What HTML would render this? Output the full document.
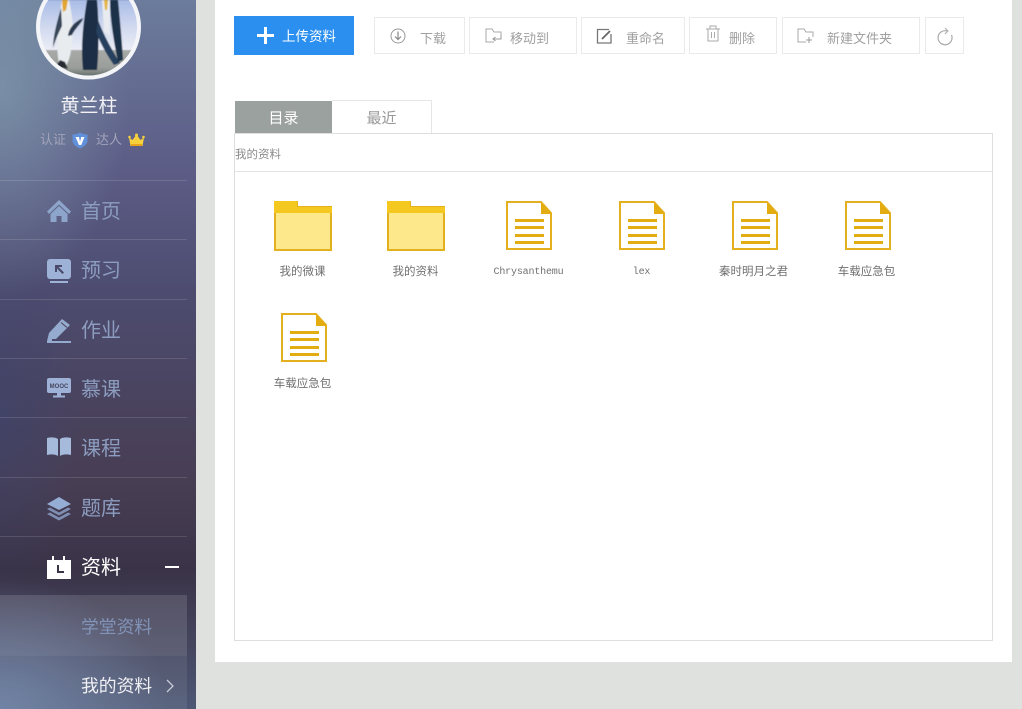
<!DOCTYPE html>
<html lang="zh"><head><meta charset="utf-8"><style>
html,body{margin:0;padding:0}
body{width:1022px;height:709px;overflow:hidden;background:#dfe1de;position:relative;font-family:"Liberation Sans","Noto Sans CJK SC",sans-serif;color:#999}
.a{position:absolute;white-space:nowrap}
#side{left:0;top:0;width:196px;height:709px;overflow:hidden;background:
radial-gradient(ellipse 170px 130px at 0 709px,rgba(106,128,165,.85),rgba(106,128,165,0)),
radial-gradient(ellipse 130px 210px at 0 90px,rgba(130,158,175,.7),rgba(130,158,175,0)),
radial-gradient(ellipse 80px 170px at 0 420px,rgba(58,68,112,.5),rgba(58,68,112,0)),
linear-gradient(180deg,#6c7c9c 0,#5c5c86 170px,#4d4c70 290px,#4a4460 390px,#483e54 480px,#3a3348 570px,#454760 650px,#4d5875 709px)}
.sep{position:absolute;left:0;width:187px;height:1px;background:rgba(255,255,255,.13)}
.mi{position:absolute;left:81px;font-size:20px;line-height:24px;color:#8c9dc0}
.ic{position:absolute;left:47px}
.btn{position:absolute;top:17px;height:37px;border:1px solid #eaeaea;box-sizing:border-box;background:#fff;font-size:13px;color:#a0a0a0;line-height:41px}
.btn span{position:absolute;top:0;white-space:nowrap}
.btn svg{position:absolute}
.fn{position:absolute;width:113px;text-align:center;font-size:11.5px;line-height:14px;color:#707070}
.mono{font-family:"Liberation Mono",monospace;font-size:10px;letter-spacing:-.17px}
</style></head><body>
<div class="a" id="side">
<svg class="a" style="left:36px;top:0" width="106" height="82" viewBox="36 0 106 82"><defs><clipPath id="c"><circle cx="88.500" cy="27" r="50"/></clipPath><linearGradient id="sk" x1="0" y1="0" x2="0" y2="1"><stop offset="0" stop-color="#a9bce6"/><stop offset=".5" stop-color="#cfd8ef"/><stop offset="1" stop-color="#eceef6"/></linearGradient><linearGradient id="gr" x1="0" y1="0" x2="0" y2="1"><stop offset="0" stop-color="#a8aaa8"/><stop offset=".6" stop-color="#9a9e9a"/><stop offset="1" stop-color="#4e5855"/></linearGradient><filter id="b" x="-5%" y="-5%" width="110%" height="110%"><feGaussianBlur stdDeviation=".5"/></filter></defs>
<g clip-path="url(#c)"><g filter="url(#b)"><rect x="36" y="0" width="106" height="51" fill="url(#sk)"/><rect x="36" y="50" width="106" height="30" fill="url(#gr)"/>
<path d="M59 64C56 48 57 24 62 0H69C73 18 74 34 71 50C70 58 68 62 66 66Z" fill="#e9ecef"/>
<path d="M61 8C57 22 53 36 53 48C56 38 59 32 62 26Z" fill="#39465a"/>
<path d="M62 0H68L66 10L63 12Z" fill="#e2a52e"/>
<path d="M60 60L56 66L68 69L65 62Z" fill="#252b30"/>
<path d="M68 36C69 27 76 21 83 18C83 22 76 27 72 35Z" fill="#2a3a50"/>
<path d="M83 70C81 50 82 30 87 0H97C99 20 99 50 97 70Z" fill="#1b2e45"/>
<path d="M98 20C104 36 112 50 120 63L114 65C106 54 100 42 96 32Z" fill="#27405f"/>
<path d="M102 0H110V36L104 32Z" fill="#e8ebf0"/>
<path d="M104 0H108L107 10H105Z" fill="#e3b53c"/>
<path d="M110 0H118C120 20 122 42 123 60L118 62C114 42 110 20 110 0Z" fill="#1a3149"/></g></g>
<circle cx="88.500" cy="27" r="50.500" fill="none" stroke="#f4f5f8" stroke-width="4"/></svg>
<div class="a" style="left:0;width:178px;top:95px;text-align:center;font-size:19px;line-height:24px;color:#f2f2f6">黄兰柱</div>
<div class="a" style="left:40px;top:132px;font-size:13px;line-height:16px;color:#a3a3ba">认证</div>
<svg class="a" style="left:72px;top:132px" width="16" height="17" viewBox="0 0 16 17"><path d="M.5 2.500C4 2.500 6 1.500 8 .5C10 1.500 12 2.500 15.500 2.500V8.500C15.500 12.500 11 15 8 16.500C5 15 .5 12.500 .5 8.500Z" fill="#6291dc"/><path d="M3.500 5H7L8 10L9.200 5H12.500L9.200 13H7Z" fill="#fff"/></svg>
<div class="a" style="left:96px;top:132px;font-size:13px;line-height:16px;color:#a3a3ba">达人</div>
<svg class="a" style="left:128px;top:133px" width="17" height="14" viewBox="0 0 17 14"><path d="M1 4.500L4.500 7L8.500 1.500L12.500 7L16 4.500L14.500 13H2.500Z" fill="#f7d13c"/><circle cx="8.500" cy="2" r="1.500" fill="#f7d13c"/><circle cx="1.500" cy="4" r="1.300" fill="#f7d13c"/><circle cx="15.500" cy="4" r="1.300" fill="#f7d13c"/><rect x="3" y="11" width="11" height="2" fill="#e8a519"/></svg>
<div class="sep" style="top:180px"></div><div class="sep" style="top:239px"></div><div class="sep" style="top:299px"></div><div class="sep" style="top:358px"></div><div class="sep" style="top:417px"></div><div class="sep" style="top:477px"></div><div class="sep" style="top:536px"></div>
<svg class="ic" style="top:200px" width="24" height="23" viewBox="0 0 24 23"><path d="M12 0L24 11.500L22 14L12 4.500L2 14L0 11.500Z" fill="#8ea5cb"/><path d="M3.500 14L12 6L20.500 14V22H14.500V16H9.500V22H3.500Z" fill="#8ea5cb"/></svg>
<div class="mi" style="top:200px">首页</div>
<svg class="ic" style="top:259px" width="24" height="25" viewBox="0 0 24 25"><rect x="0" y="0" width="24" height="20" rx="3" fill="#9db2d6"/><path d="M8 6H15V8H11.500L17 13.500L15.500 15L10 9.500V13H8Z" fill="#4b4a6b"/><rect x="3" y="22" width="18" height="2" fill="#9db2d6"/></svg>
<div class="mi" style="top:259px">预习</div>
<svg class="ic" style="top:318px" width="24" height="26" viewBox="0 0 24 26"><path d="M0 23L2 15L15 1L23 7L9 21L5 21V23H24V25H0Z" fill="#95aacf"/><path d="M14 4.500L20 9.500" stroke="#4b4458" stroke-width="1"/></svg>
<div class="mi" style="top:319px">作业</div>
<svg class="ic" style="top:378px" width="24" height="20" viewBox="0 0 24 20"><rect width="24" height="15" rx="2" fill="#9db2d6"/><rect x="10" y="15" width="4" height="3" fill="#9db2d6"/><rect x="6" y="17.500" width="12" height="2" fill="#9db2d6"/><text x="12" y="10" font-size="6" font-weight="bold" text-anchor="middle" fill="#48465f" font-family="Liberation Sans">MOOC</text></svg>
<div class="mi" style="top:378px">慕课</div>
<svg class="ic" style="top:437px" width="24" height="20" viewBox="0 0 24 20"><path d="M0 1C4 0 8 0 11 2V19C8 17 4 17 0 18Z" fill="#a6bbdc"/><path d="M24 1C20 0 16 0 13 2V19C16 17 20 17 24 18Z" fill="#a6bbdc"/></svg>
<div class="mi" style="top:437px">课程</div>
<svg class="ic" style="top:497px" width="24" height="24" viewBox="0 0 24 24"><path d="M12 0L24 7L12 13L0 7Z" fill="#95aed6"/><path d="M3 10.500L12 15.500L21 10.500L24 12L12 18.500L0 12Z" fill="#7f8fb3"/><path d="M3 15.500L12 20.500L21 15.500L24 17L12 23.500L0 17Z" fill="#7f8fb3"/></svg>
<div class="mi" style="top:497px">题库</div>
<svg class="ic" style="top:556px" width="24" height="24" viewBox="0 0 24 24"><path d="M0 4H5V0H7V4H16V0H18V4H24V23H0Z" fill="#fff"/><path d="M10 9H12V15H17V17H10Z" fill="#3c3448"/></svg>
<div class="mi" style="top:556px;color:#fff">资料</div>
<div class="a" style="left:165px;top:566px;width:14px;height:2px;background:#fff"></div>
<div class="a" style="left:0;top:595px;width:187px;height:60px;background:rgba(255,255,255,.13)"></div>
<div class="a" style="left:0;top:655px;width:187px;height:1px;background:rgba(255,255,255,.12)"></div>
<div class="a" style="left:0;top:656px;width:187px;height:53px;background:rgba(255,255,255,.08)"></div>
<div class="mi" style="top:615px;font-size:17.800px;color:#8293b8">学堂资料</div>
<div class="mi" style="top:674px;font-size:17.800px;color:#f0f0f4">我的资料</div>
<svg class="a" style="left:165px;top:678px" width="10" height="16" viewBox="0 0 10 16"><path d="M2 2L8 8L2 14" fill="none" stroke="#c7cbd8" stroke-width="1.300"/></svg>
</div>

<div class="a" style="left:215px;top:0;width:797px;height:662px;background:#fff"></div>

<div class="a" style="left:234px;top:16px;width:120px;height:39px;background:#2b8ff0"></div>
<svg class="a" style="left:257px;top:27px" width="17" height="17" viewBox="0 0 17 17"><path d="M7 0H10V7H17V10H10V17H7V10H0V7H7Z" fill="#fff"/></svg>
<div class="a" style="left:282px;top:28px;font-size:13.500px;line-height:17px;color:#fff">上传资料</div>

<div class="btn" style="left:374px;width:91px"><svg style="left:15px;top:10px" width="16" height="16" viewBox="0 0 16 16"><circle cx="8" cy="8" r="7" fill="none" stroke="#999"/><path d="M8 3.500V11M5 8.500L8 11.500L11 8.500" fill="none" stroke="#888" stroke-width="1.200"/></svg><span style="left:45px">下载</span></div>
<div class="btn" style="left:469px;width:108px"><svg style="left:15px;top:10px" width="17" height="17" viewBox="0 0 17 17"><path d="M9 14H1V1H7L9 4H16V9" fill="none" stroke="#aaa"/><path d="M16 7V11H8M10.500 9L8 11L10.500 13" fill="none" stroke="#999"/></svg><span style="left:40px">移动到</span></div>
<div class="btn" style="left:581px;width:104px"><svg style="left:14px;top:10px" width="17" height="17" viewBox="0 0 17 17"><path d="M13 1.500H1.500V15H15V6" fill="none" stroke="#777" stroke-width="1.300"/><path d="M6 11L14 3" stroke="#666" stroke-width="1.800"/></svg><span style="left:44px">重命名</span></div>
<div class="btn" style="left:689px;width:88px"><svg style="left:15px;top:7px" width="16" height="18" viewBox="0 0 16 18"><path d="M1 4H15M5 4V1H11V4M3 4V16H13V4M6.500 7V13M9.500 7V13" fill="none" stroke="#aaa"/></svg><span style="left:39px">删除</span></div>
<div class="btn" style="left:782px;width:138px"><svg style="left:14px;top:10px" width="18" height="17" viewBox="0 0 18 17"><path d="M9 14H1V1H7L9 4H16V9" fill="none" stroke="#aaa"/><path d="M12 9V15M9 12H15" stroke="#999"/></svg><span style="left:44px">新建文件夹</span></div>
<div class="btn" style="left:925px;width:39px"><svg style="left:10px;top:9px" width="18" height="19" viewBox="0 0 18 19"><path d="M11 4A7 7 0 1 0 15.500 8" fill="none" stroke="#aaa" stroke-width="1.200"/><path d="M9 1L12 4L9 7" fill="none" stroke="#aaa"/></svg></div>

<div class="a" style="left:235px;top:101px;width:97px;height:33px;background:#9ba19e;color:#fff;font-size:15px;line-height:35px;text-align:center">目录</div>
<div class="a" style="left:332px;top:100px;width:100px;height:34px;box-sizing:border-box;border:1px solid #e6e6e6;border-left:0;border-bottom:0;color:#999;font-size:15px;line-height:36px;text-align:center">最近</div>
<div class="a" style="left:234px;top:133px;width:759px;height:508px;box-sizing:border-box;border:1px solid #dedede"></div>
<div class="a" style="left:235px;top:171px;width:757px;height:1px;background:#e4e4e4"></div>
<div class="a" style="left:235px;top:148px;font-size:11.500px;line-height:14px;color:#8a8a8a">我的资料</div>

<svg width="0" height="0" style="position:absolute"><defs>
<g id="fo"><path d="M0 0H24V5H58V50H0Z" fill="#e3b01f"/><rect x="0" y="0" width="23" height="11" fill="#f4c81f"/><rect x="0" y="6" width="58" height="6" fill="#f4c81f"/><rect x="2" y="12" width="54" height="36" fill="#fee88c"/></g>
<g id="do"><path d="M1 1H35L45 12V48H1Z" fill="#fff" stroke="#e5b01f" stroke-width="2"/><path d="M35 1L46 13H35Z" fill="#e3ad12"/><rect x="9" y="18" width="29" height="3" fill="#e3ad12"/><rect x="9" y="25" width="29" height="3" fill="#e3ad12"/><rect x="9" y="33" width="29" height="3" fill="#e3ad12"/><rect x="9" y="40" width="29" height="3" fill="#e3ad12"/></g>
</defs></svg>
<svg class="a" style="left:274px;top:201px" width="58" height="50"><use href="#fo"/></svg>
<svg class="a" style="left:387px;top:201px" width="58" height="50"><use href="#fo"/></svg>
<svg class="a" style="left:506px;top:201px" width="47" height="50"><use href="#do"/></svg>
<svg class="a" style="left:619px;top:201px" width="47" height="50"><use href="#do"/></svg>
<svg class="a" style="left:732px;top:201px" width="47" height="50"><use href="#do"/></svg>
<svg class="a" style="left:845px;top:201px" width="47" height="50"><use href="#do"/></svg>
<svg class="a" style="left:281px;top:313px" width="47" height="50"><use href="#do"/></svg>
<div class="fn" style="left:246px;top:265px">我的微课</div>
<div class="fn" style="left:359px;top:265px">我的资料</div>
<div class="fn mono" style="left:472px;top:266px">Chrysanthemu</div>
<div class="fn mono" style="left:585px;top:266px">lex</div>
<div class="fn" style="left:697px;top:265px">秦时明月之君</div>
<div class="fn" style="left:810px;top:265px">车载应急包</div>
<div class="fn" style="left:246px;top:377px">车载应急包</div>
</body></html>
